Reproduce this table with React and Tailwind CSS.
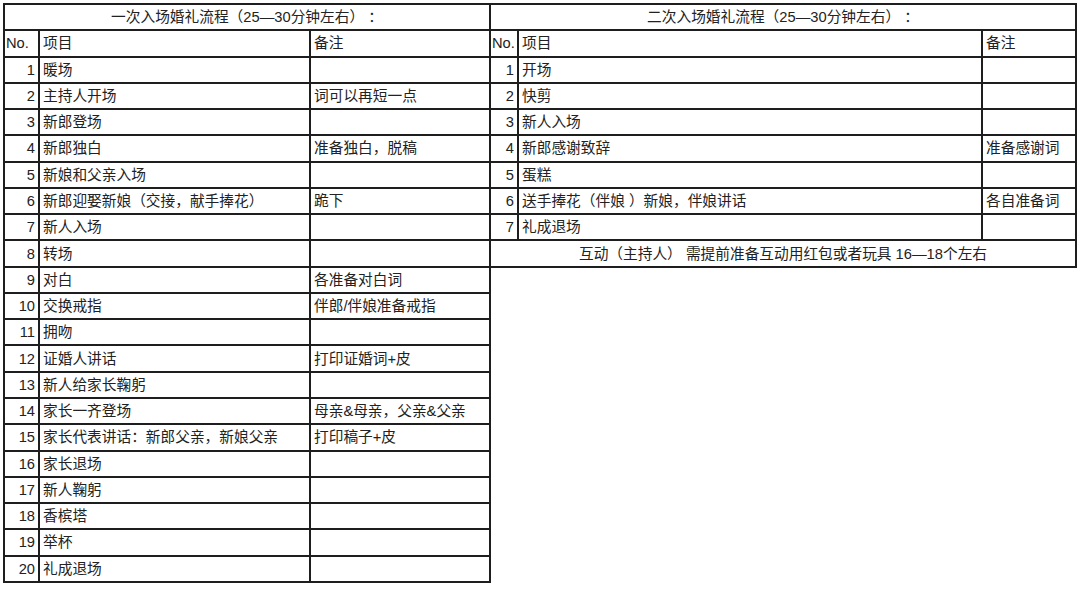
import React from "react";

const left = [
  ["1", "暖场", ""],
  ["2", "主持人开场", "词可以再短一点"],
  ["3", "新郎登场", ""],
  ["4", "新郎独白", "准备独白，脱稿"],
  ["5", "新娘和父亲入场", ""],
  ["6", "新郎迎娶新娘（交接，献手捧花）", "跪下"],
  ["7", "新人入场", ""],
  ["8", "转场", ""],
  ["9", "对白", "各准备对白词"],
  ["10", "交换戒指", "伴郎/伴娘准备戒指"],
  ["11", "拥吻", ""],
  ["12", "证婚人讲话", "打印证婚词+皮"],
  ["13", "新人给家长鞠躬", ""],
  ["14", "家长一齐登场", "母亲&母亲，父亲&父亲"],
  ["15", "家长代表讲话：新郎父亲，新娘父亲", "打印稿子+皮"],
  ["16", "家长退场", ""],
  ["17", "新人鞠躬", ""],
  ["18", "香槟塔", ""],
  ["19", "举杯", ""],
  ["20", "礼成退场", ""],
];

const right = [
  ["1", "开场", ""],
  ["2", "快剪", ""],
  ["3", "新人入场", ""],
  ["4", "新郎感谢致辞", "准备感谢词"],
  ["5", "蛋糕", ""],
  ["6", "送手捧花（伴娘 ）新娘，伴娘讲话", "各自准备词"],
  ["7", "礼成退场", ""],
];

const cell = "bg-white flex items-center overflow-hidden whitespace-nowrap";

function Rows({ rows }) {
  return rows.map((r) => (
    <React.Fragment key={r[0]}>
      <div className={cell + " justify-end pr-[3px]"}>{r[0]}</div>
      <div className={cell + " pl-[3px]"}>{r[1]}</div>
      <div className={cell + " pl-[3px]"}>{r[2]}</div>
    </React.Fragment>
  ));
}

export default function App() {
  return (
    <div
      className="w-[1080px] h-[590px] bg-white pl-[3px] pt-[3px] text-[14.7px] text-[#222]"
      style={{ fontFamily: '"Liberation Sans", "Noto Sans CJK SC", sans-serif' }}
    >
      <div className="flex items-start">
        <div className="grid grid-cols-[33px_269px_178px] auto-rows-[24.27px] gap-[2px] bg-[#1e1e1e] p-[2px]">
          <div className={cell + " col-span-3 justify-center"}>一次入场婚礼流程（25—30分钟左右）&nbsp;：</div>
          <div className={cell + " pl-[1px]"}>No.</div>
          <div className={cell + " pl-[3px]"}>项目</div>
          <div className={cell + " pl-[3px]"}>备注</div>
          <Rows rows={left} />
        </div>
        <div className="grid grid-cols-[26px_462px_92px] auto-rows-[24.27px] gap-[2px] bg-[#1e1e1e] py-[2px] pr-[2px]">
          <div className={cell + " col-span-3 justify-center"}>二次入场婚礼流程（25—30分钟左右）&nbsp;：</div>
          <div className={cell + " pl-[1px]"}>No.</div>
          <div className={cell + " pl-[3px]"}>项目</div>
          <div className={cell + " pl-[3px]"}>备注</div>
          <Rows rows={right} />
          <div className={cell + " col-span-3 justify-center"}>互动（主持人） 需提前准备互动用红包或者玩具 16—18个左右</div>
        </div>
      </div>
    </div>
  );
}
